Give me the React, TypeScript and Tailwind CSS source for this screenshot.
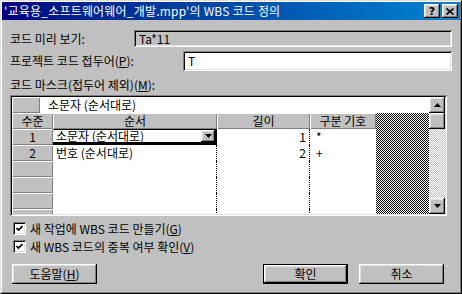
import React from "react";

const raised =
  "shadow-[inset_-1px_-1px_#000,inset_1px_1px_#fff,inset_-2px_-2px_#808080,inset_2px_2px_#dfdfdf]";
const sunken =
  "shadow-[inset_1px_1px_#808080,inset_-1px_-1px_#fff,inset_2px_2px_#000,inset_-2px_-2px_#dfdfdf]";
const cellRaised = "shadow-[inset_1px_1px_#fff,inset_-1px_-1px_#808080]";

function Check() {
  return (
    <div className={`w-[13px] h-[13px] bg-white ${sunken} flex items-center justify-center shrink-0`}>
      <svg width="7" height="7" viewBox="0 0 7 7">
        <path d="M0.5 3 L2.5 5 L6.5 1" stroke="#000" strokeWidth="1.7" fill="none" />
      </svg>
    </div>
  );
}

function Tri({ up }: { up?: boolean }) {
  return (
    <svg width="7" height="4" viewBox="0 0 7 4">
      {up ? <polygon points="3.5,0 7,4 0,4" fill="#000" /> : <polygon points="0,0 7,0 3.5,4" fill="#000" />}
    </svg>
  );
}

function Btn({ children, def }: { children: React.ReactNode; def?: boolean }) {
  return (
    <div
      className={`w-[85px] h-[20px] flex items-center justify-center bg-[#c0c0c0] ${
        def ? "border border-black" : ""
      }`}
    >
      <div className={`w-full h-full flex items-center justify-center ${raised}`}>{children}</div>
    </div>
  );
}

export default function App() {
  const rows = ["1", "2", "", "", "", ""];
  return (
    <div className="w-[462px] h-[294px] bg-[#c0c0c0] text-[12px] text-black border border-t-[#dfdfdf] border-l-[#dfdfdf] border-r-black border-b-black font-['Noto_Sans_CJK_KR','Noto_Sans',sans-serif] overflow-hidden">
      <div className="h-full border border-t-white border-l-white border-r-[#808080] border-b-[#808080] flex flex-col">
        {/* title bar */}
        <div className="h-[18px] shrink-0 bg-gradient-to-r from-[#000080] to-[#1084d0] flex items-center pl-[2px] pr-[2px]">
          <span className="text-white text-[12px] leading-[18px] whitespace-nowrap tracking-[0.2px]">
            '교육용_소프트웨어웨어_개발.mpp'의 WBS 코드 정의
          </span>
          <div className="ml-auto flex items-center gap-[2px]">
            <div className={`w-[16px] h-[14px] bg-[#c0c0c0] ${raised} flex items-center justify-center`}>
              <span className="font-['DejaVu_Sans',sans-serif] font-bold text-[11px] leading-none">?</span>
            </div>
            <div className={`w-[16px] h-[14px] bg-[#c0c0c0] ${raised} flex items-center justify-center`}>
              <svg width="8" height="7" viewBox="0 0 8 7">
                <path d="M0.5 0.5 L7.5 6.5 M7.5 0.5 L0.5 6.5" stroke="#000" strokeWidth="1.6" />
              </svg>
            </div>
          </div>
        </div>

        {/* content */}
        <div className="flex flex-col px-[8px]">
          <div className="mt-[10px] h-[17px] flex items-center">
            <div className="w-[124px] shrink-0 leading-[14px]">코드 미리 보기:</div>
            <div className={`w-[318px] h-[17px] bg-[#c0c0c0] ${sunken} pl-[5px] leading-[17px]`}>Ta*11</div>
          </div>
          <div className="mt-[4px] h-[20px] flex items-center">
            <div className="w-[173px] shrink-0 leading-[14px]">
              프로젝트 코드 접두어(<span className="underline">P</span>):
            </div>
            <div className={`w-[270px] h-[20px] bg-white ${sunken} pl-[5px] leading-[20px]`}>T</div>
          </div>
          <div className="h-[24px] pt-[7px] leading-[14px]">
            코드 마스크(접두어 제외)(<span className="underline">M</span>):
          </div>

          {/* grid */}
          <div className={`w-[437px] h-[121px] p-[2px] bg-[#c0c0c0] ${sunken}`}>
            <div className="h-full flex">
              <div className="w-[417px] flex flex-col">
                <div className="h-[16px] flex shrink-0">
                  <div className={`w-[28px] h-full bg-[#c0c0c0] ${cellRaised}`} />
                  <div className="flex-1 bg-white pl-[8px] leading-[16px]">소문자 (순서대로)</div>
                </div>
                <div className="flex-1 flex overflow-hidden">
                  <div className="w-[364px] flex flex-col">
                    <div className="h-[16px] flex shrink-0">
                      <div className={`w-[41px] bg-[#c0c0c0] ${cellRaised} text-center leading-[16px]`}>수준</div>
                      <div className={`w-[164px] bg-[#c0c0c0] ${cellRaised} text-center leading-[16px]`}>순서</div>
                      <div className={`w-[93px] bg-[#c0c0c0] ${cellRaised} text-center leading-[16px]`}>길이</div>
                      <div className={`w-[66px] bg-[#c0c0c0] ${cellRaised} text-center leading-[16px]`}>구분 기호</div>
                    </div>
                    {rows.map((r, i) => (
                      <div key={i} className="h-[16px] flex shrink-0">
                        <div className={`w-[41px] bg-[#c0c0c0] ${cellRaised} text-center leading-[16px]`}>{r}</div>
                        {i === 0 ? (
                          <div className="w-[164px] h-[16px] bg-white border-t border-t-black border-b-[3px] border-b-black border-r-2 border-r-black flex items-center pl-[3px]">
                            <span className="leading-[12px] text-[12px] flex-1 whitespace-nowrap">소문자 (순서대로)</span>
                            <div className={`w-[14px] h-[12px] shrink-0 bg-[#c0c0c0] ${raised} flex items-center justify-center`}>
                              <Tri />
                            </div>
                          </div>
                        ) : (
                          <div className="w-[164px] bg-white border-r border-dotted border-black pl-[3px] leading-[16px]">
                            {i === 1 ? "번호 (순서대로)" : ""}
                          </div>
                        )}
                        <div className="w-[93px] bg-white border-r border-dotted border-black text-right pr-[3px] leading-[16px]">
                          {r}
                        </div>
                        <div className="w-[66px] bg-white pl-[6px] leading-[16px]">
                          {i === 0 ? "*" : i === 1 ? "+" : ""}
                        </div>
                      </div>
                    ))}
                  </div>
                  <div className="flex-1 bg-[image:repeating-conic-gradient(#000_0_25%,#fff_0_50%)] bg-[length:2px_2px]" />
                </div>
              </div>
              {/* scrollbar */}
              <div className="w-[16px] flex flex-col">
                <div className={`h-[16px] shrink-0 bg-[#c0c0c0] ${raised} flex items-center justify-center`}>
                  <Tri up />
                </div>
                <div className={`h-[16px] shrink-0 bg-[#c0c0c0] ${raised}`} />
                <div className="flex-1 bg-[image:repeating-conic-gradient(#c0c0c0_0_25%,#fff_0_50%)] bg-[length:2px_2px]" />
                <div className={`h-[16px] shrink-0 bg-[#c0c0c0] ${raised} flex items-center justify-center`}>
                  <Tri />
                </div>
              </div>
            </div>
          </div>

          <div className="mt-[6px] h-[13px] flex items-center pl-[3px] gap-[4px]">
            <Check />
            <span className="leading-[13px]">
              새 작업에 WBS 코드 만들기(<span className="underline">G</span>)
            </span>
          </div>
          <div className="mt-[5px] h-[13px] flex items-center pl-[3px] gap-[4px]">
            <Check />
            <span className="leading-[13px]">
              새 WBS 코드의 중복 여부 확인(<span className="underline">V</span>)
            </span>
          </div>

          <div className="mt-[11px] flex items-center">
            <div className="ml-[2px]">
              <Btn>
                도움말(<span className="underline">H</span>)
              </Btn>
            </div>
            <div className="ml-auto">
              <Btn def>확인</Btn>
            </div>
            <div className="ml-[11px] mr-[8px]">
              <Btn>취소</Btn>
            </div>
          </div>
        </div>
      </div>
    </div>
  );
}
